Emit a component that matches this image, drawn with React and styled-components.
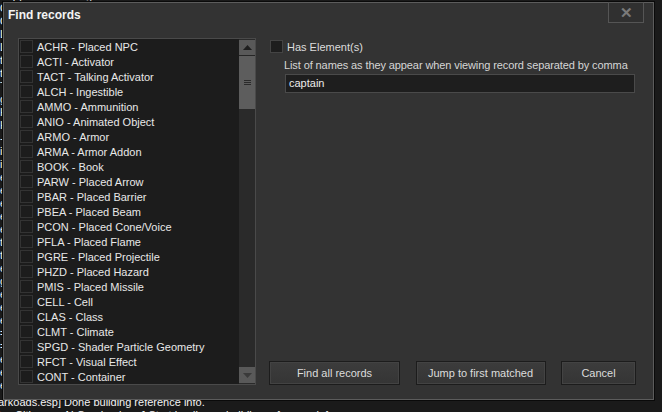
import React from "react";
import styled, { createGlobalStyle } from "styled-components";

const Global = createGlobalStyle`
  html, body { margin: 0; padding: 0; }
  body {
    width: 662px; height: 412px; overflow: hidden;
    background: #1a1a1a;
    font-family: "Liberation Sans", Arial, sans-serif;
  }
  * { box-sizing: border-box; }
`;

const Screen = styled.div`
  width: 662px;
  height: 412px;
  overflow: hidden;
  background: #1a1a1a;
  display: flex;
  flex-direction: column;
`;

const LogStrip = styled.div`
  flex: none;
  height: ${(p) => p.$h}px;
  overflow: hidden;
  color: #f2f2f2;
  font-size: 11px;
  line-height: 13px;
  white-space: nowrap;
`;

const LogInner = styled.div`
  margin-top: ${(p) => p.$mt}px;
  margin-left: -2px;
`;

const Middle = styled.div`
  flex: none;
  display: flex;
  height: 398px;
`;

const LeftLog = styled.div`
  width: 3px;
  height: 398px;
  flex: none;
  overflow: hidden;
  color: #f2f2f2;
  font-size: 11px;
  line-height: 13px;
  white-space: nowrap;
`;

const Dialog = styled.div`
  width: 651px;
  height: 398px;
  flex: none;
  background: #333333;
  border: 1px solid #5c5c5c;
  box-shadow: 0 0 0 1px #0a0a0a;
  display: flex;
  flex-direction: column;
`;

const TitleBar = styled.div`
  height: 22px;
  display: flex;
  justify-content: space-between;
  align-items: flex-start;
`;

const Title = styled.div`
  padding: 5px 0 0 4px;
  font-weight: bold;
  font-size: 12px;
  color: #f4f4f4;
`;

const CloseButton = styled.div`
  width: 36px;
  height: 21px;
  margin: -1px 9px 0 0;
  border: 1px solid #555;
  background: #303030;
  color: #7a7a7a;
  font-size: 15px;
  font-weight: bold;
  display: flex;
  align-items: center;
  justify-content: center;
`;

const Body = styled.div`
  flex: 1;
  display: flex;
  gap: 13px;
  padding: 13px 17px 13px 14px;
`;

const ListBox = styled.div`
  width: 238px;
  height: 347px;
  background: #1c1c1c;
  border: 1px solid #4a4a4a;
  display: flex;
  overflow: hidden;
`;

const Rows = styled.div`
  flex: 1;
  padding: 0 0 0 1px;
`;

const Row = styled.div`
  height: 15px;
  display: flex;
  align-items: center;
  gap: 4px;
  color: #e8e8e8;
  font-size: 11px;
  white-space: nowrap;
`;

const Box = styled.div`
  width: 13px;
  height: 13px;
  flex: none;
  background: ${(p) => p.$bg || "#1c1c1c"};
  border: 1px solid ${(p) => p.$edge || "#333"};
`;

const ScrollBar = styled.div`
  width: 16px;
  padding: 1px 0;
  background: #2a2a2a;
  display: flex;
  flex-direction: column;
`;

const ArrowBtn = styled.div`
  height: 16px;
  flex: none;
  background: #595959;
  display: flex;
  align-items: center;
  justify-content: center;
  border-bottom: ${(p) => (p.$gap ? "1px solid #262626" : "none")};
`;

const Thumb = styled.div`
  height: 53px;
  flex: none;
  background: #5d5d5d;
  display: flex;
  align-items: center;
  justify-content: center;
`;

const Track = styled.div`
  flex: 1;
`;

const Right = styled.div`
  flex: 1;
  display: flex;
  flex-direction: column;
  justify-content: space-between;
`;

const Options = styled.div`
  display: flex;
  flex-direction: column;
  padding-top: 2px;
`;

const CheckRow = styled.label`
  display: flex;
  align-items: center;
  gap: 4px;
  padding-left: 1px;
  height: 13px;
  color: #dcdcdc;
  font-size: 11px;
`;

const Hint = styled.div`
  margin: 6px 0 0 15px;
  color: #d6d6d6;
  font-size: 11px;
  line-height: 13px;
  letter-spacing: -0.1px;
  white-space: nowrap;
`;

const Field = styled.div`
  margin: 2px 0 0 16px;
  width: 350px;
  height: 19px;
  background: #1e1e1e;
  border: 1px solid #4a4a4a;
  color: #ececec;
  font-size: 11px;
  padding: 2px 0 0 3px;
`;

const Buttons = styled.div`
  display: flex;
  justify-content: space-between;
  width: 367px;
  margin-bottom: 1px;
`;

const Button = styled.div`
  width: ${(p) => p.$w}px;
  height: 24px;
  border: 1px solid #1c1c1c;
  box-shadow: inset 0 0 0 1px #434343;
  background: linear-gradient(#3c3c3c, #353535);
  color: #dcdcdc;
  font-size: 11px;
  display: flex;
  align-items: center;
  justify-content: center;
`;

const records = [
  "ACHR - Placed NPC",
  "ACTI - Activator",
  "TACT - Talking Activator",
  "ALCH - Ingestible",
  "AMMO - Ammunition",
  "ANIO - Animated Object",
  "ARMO - Armor",
  "ARMA - Armor Addon",
  "BOOK - Book",
  "PARW - Placed Arrow",
  "PBAR - Placed Barrier",
  "PBEA - Placed Beam",
  "PCON - Placed Cone/Voice",
  "PFLA - Placed Flame",
  "PGRE - Placed Projectile",
  "PHZD - Placed Hazard",
  "PMIS - Placed Missile",
  "CELL - Cell",
  "CLAS - Class",
  "CLMT - Climate",
  "SPGD - Shader Particle Geometry",
  "RFCT - Visual Effect",
  "CONT - Container",
];

const sideLog = "OOLLttTgHH-iieeeeettegeee==eeee".split("").slice(0, 30);

export default function App() {
  return (
    <Screen>
      <Global />
      <LogStrip $h={2}>
        <LogInner $mt={-10}>.esp] Done building reference info.</LogInner>
      </LogStrip>
      <Middle>
        <LeftLog>
          {sideLog.map((c, i) => (
            <div key={i}>{c}</div>
          ))}
        </LeftLog>
        <Dialog>
          <TitleBar>
            <Title>Find records</Title>
            <CloseButton>✕</CloseButton>
          </TitleBar>
          <Body>
            <ListBox>
              <Rows>
                {records.map((r) => (
                  <Row key={r}>
                    <Box />
                    {r}
                  </Row>
                ))}
              </Rows>
              <ScrollBar>
                <ArrowBtn $gap>
                  <svg width="9" height="5" viewBox="0 0 9 5">
                    <path d="M0 5 L4.5 0 L9 5 Z" fill="#1e1e1e" />
                  </svg>
                </ArrowBtn>
                <Thumb>
                  <svg width="7" height="6" viewBox="0 0 7 6">
                    <rect x="0" y="0" width="7" height="1" fill="#2a2a2a" />
                    <rect x="0" y="2" width="7" height="1" fill="#2a2a2a" />
                    <rect x="0" y="4" width="7" height="1" fill="#2a2a2a" />
                  </svg>
                </Thumb>
                <Track />
                <ArrowBtn>
                  <svg width="9" height="5" viewBox="0 0 9 5">
                    <path d="M0 0 L9 0 L4.5 5 Z" fill="#3a3a3a" />
                  </svg>
                </ArrowBtn>
              </ScrollBar>
            </ListBox>
            <Right>
              <Options>
                <CheckRow>
                  <Box $bg="#1e1e1e" $edge="#444" />
                  Has Element(s)
                </CheckRow>
                <Hint>List of names as they appear when viewing record separated by comma</Hint>
                <Field>captain</Field>
              </Options>
              <Buttons>
                <Button $w={131}>Find all records</Button>
                <Button $w={130}>Jump to first matched</Button>
                <Button $w={75}>Cancel</Button>
              </Buttons>
            </Right>
          </Body>
        </Dialog>
      </Middle>
      <LogStrip $h={12}>
        <LogInner $mt={-4}>
          <div>arkoads.esp] Done building reference info.</div>
          <div>ive Citizens - AI Overhaul.esp] Start loading or building reference info.</div>
        </LogInner>
      </LogStrip>
    </Screen>
  );
}
